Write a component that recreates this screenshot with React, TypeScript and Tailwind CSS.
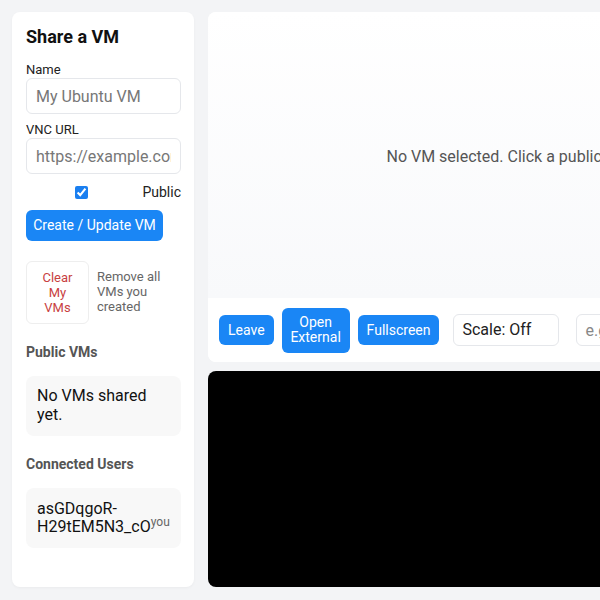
import React, { useState } from 'react';

const App: React.FC = () => {
  const [name, setName] = useState('');
  const [url, setUrl] = useState('');
  const [isPublic, setIsPublic] = useState(true);

  return (
    <div
      className="h-[600px] w-[600px] overflow-hidden bg-[#f3f4f6] text-[#111]"
      style={{ fontFamily: 'Roboto, "Noto Sans", sans-serif' }}
    >
      <div className="flex h-full w-[892px] gap-[14px] p-3">
        {/* sidebar */}
        <aside className="flex h-[575px] w-[182px] shrink-0 flex-col rounded-lg bg-white pl-[14px] pr-[13px] pt-[14px] shadow-[0_1px_3px_rgba(0,0,0,0.04)]">
          <h2 className="text-[18px] font-bold leading-[22px]">Share a VM</h2>

          <label className="mt-[14px] text-[13px] leading-[16px] text-[#222]">Name</label>
          <input
            className="h-[36px] w-full rounded-md border border-[#e5e7eb] px-[9px] text-[16px] placeholder:text-[#777] focus:outline-none"
            placeholder="My Ubuntu VM"
            value={name}
            onChange={(e) => setName(e.target.value)}
          />

          <label className="mt-[8px] text-[13px] leading-[16px] text-[#222]">VNC URL</label>
          <input
            className="h-[36px] w-full rounded-md border border-[#e5e7eb] px-[9px] text-[16px] placeholder:text-[#777] focus:outline-none"
            placeholder="https://example.com/vnc"
            value={url}
            onChange={(e) => setUrl(e.target.value)}
          />

          <div className="mt-[10px] flex items-center text-[14px] leading-[16px] text-[#222]">
            <div className="flex flex-1 justify-center pr-[6px]">
              <input
                type="checkbox"
                className="h-[13px] w-[13px] accent-[#1a7ff0]"
                checked={isPublic}
                onChange={(e) => setIsPublic(e.target.checked)}
              />
            </div>
            <span>Public</span>
          </div>

          <button className="mt-[10px] h-[31px] w-[137px] rounded-md bg-[#1a86f5] text-[14px] text-white">
            Create / Update VM
          </button>

          <div className="mt-[20px] flex items-start gap-[8px]">
            <button className="flex h-[63px] w-[63px] shrink-0 flex-col items-center justify-center rounded-md border border-[#eee] text-[13px] leading-[15px] text-[#c8413f]">
              <span>Clear</span>
              <span>My</span>
              <span>VMs</span>
            </button>
            <p className="pt-[8px] text-[13px] leading-[15px] text-[#666]">Remove all VMs you created</p>
          </div>

          <h3 className="mt-[20px] text-[14px] font-bold leading-[16px] text-[#555]">Public VMs</h3>
          <div className="mt-[16px] h-[60px] rounded-lg bg-[#f8f8f8] px-[11px] pt-[10px] text-[16px] leading-[19px]">
            No VMs shared yet.
          </div>

          <h3 className="mt-[20px] text-[14px] font-bold leading-[16px] text-[#555]">Connected Users</h3>
          <div className="mt-[16px] h-[60px] rounded-lg bg-[#f8f8f8] px-[11px] pt-[12px] text-[16px] leading-[18px]">
            asGDqgoR-H29tEM5N3_cO
            <sup className="text-[12px] text-[#666]">you</sup>
          </div>
        </aside>

        {/* main */}
        <main className="flex h-[575px] flex-1 flex-col gap-[9px]">
          <section className="flex flex-col overflow-hidden rounded-lg bg-white">
            <div className="flex h-[286px] items-center justify-center bg-gradient-to-b from-white to-[#f8f9fb] pt-[3px] text-[16px] text-[#555]">
              No VM selected. Click a public VM to view it.
            </div>
            <div className="flex h-[64px] items-center gap-[8px] bg-white px-[11px]">
              <button className="h-[30px] rounded-md bg-[#1a86f5] px-[9px] text-[14px] text-white">Leave</button>
              <button className="flex h-[45px] w-[68px] flex-col items-center justify-center rounded-md bg-[#1a86f5] text-[14px] leading-[15px] text-white">
                <span>Open</span>
                <span>External</span>
              </button>
              <button className="h-[30px] rounded-md bg-[#1a86f5] px-[9px] text-[14px] text-white">Fullscreen</button>
              <select className="ml-[6px] h-[32px] w-[106px] appearance-none rounded-md border border-[#e5e7eb] bg-white px-[8px] text-[16px] text-[#222] focus:outline-none">
                <option>Scale: Off</option>
                <option>Scale: On</option>
              </select>
              <input
                className="ml-[9px] h-[32px] w-[160px] rounded-md border border-[#e5e7eb] px-[8px] text-[16px] placeholder:text-[#888] focus:outline-none"
                placeholder="e.g. 1280x720"
              />
            </div>
          </section>
          <div className="flex-1 rounded-lg bg-black" />
        </main>
      </div>
    </div>
  );
};

export default App;
